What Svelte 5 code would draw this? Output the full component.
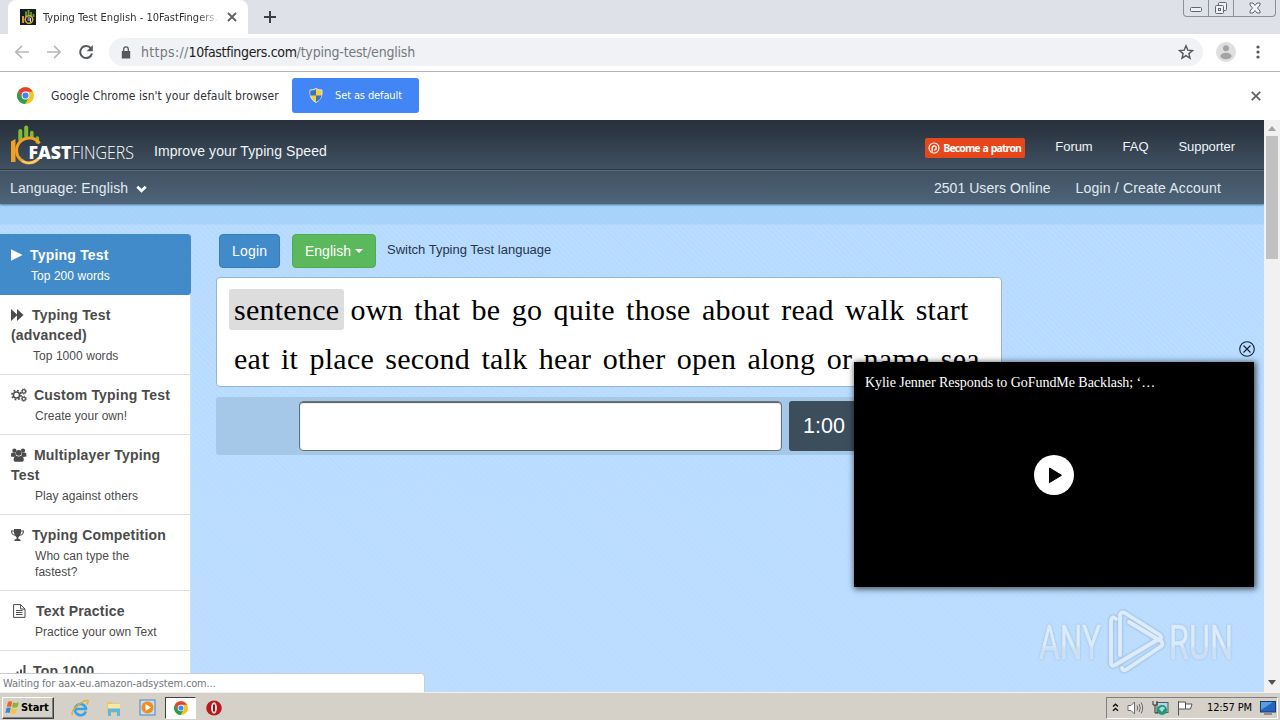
<script lang="ts">
	type Item = { icon: string; title: string; sub: string; indent: number; gap: number };

	// Sidebar entries, `indent` is where the sub line starts
	const items: Item[] = [
		{ icon: 'play', title: 'Typing Test', sub: 'Top 200 words', indent: 20, gap: 7 },
		{ icon: 'forward', title: 'Typing Test (advanced)', sub: 'Top 1000 words', indent: 22, gap: 8 },
		{ icon: 'cogs', title: 'Custom Typing Test', sub: 'Create your own!', indent: 24, gap: 7 },
		{ icon: 'users', title: 'Multiplayer Typing Test', sub: 'Play against others', indent: 24, gap: 7 },
		{ icon: 'trophy', title: 'Typing Competition', sub: 'Who can type the fastest?', indent: 24, gap: 8 },
		{ icon: 'file', title: 'Text Practice', sub: 'Practice your own Text', indent: 24, gap: 10 },
		{ icon: 'signal', title: 'Top 1000', sub: '', indent: 24, gap: 6 }
	];

	const rows = [
		['sentence', 'own', 'that', 'be', 'go', 'quite', 'those', 'about', 'read', 'walk', 'start'],
		['eat', 'it', 'place', 'second', 'talk', 'hear', 'other', 'open', 'along', 'or', 'name', 'sea']
	];

	let active = $state(0);
	let typed = $state('');
	let showVideo = $state(true);
</script>

{#snippet chrome(size: number)}
	<svg width={size} height={size} viewBox="0 0 16 16">
		<circle cx="8" cy="8" r="8" fill="#fbc116" />
		<path d="M1.1 4A8 8 0 0 0 7.6 16L11.2 9.8 8 8 4.8 9.9z" fill="#2a9d55" />
		<path d="M1.1 4 4.8 9.9 8 4.4h6.9A8 8 0 0 0 1.1 4z" fill="#dd4436" />
		<circle cx="8" cy="8" r="3.7" fill="#fff" />
		<circle cx="8" cy="8" r="2.9" fill="#4285f4" />
	</svg>
{/snippet}

{#snippet icon(name: string)}
	{#if name === 'play'}
		<svg width="12" height="14" viewBox="0 0 12 14"><path d="M0 1.2v11.6L11.6 7z" fill="currentColor" /></svg>
	{:else if name === 'forward'}
		<svg width="13" height="14" viewBox="0 0 13 14"><path d="M0 1v12l6-5.500V13l6.500-6L6 1v5.500z" fill="currentColor" /></svg>
	{:else if name === 'cogs'}
		<svg width="16" height="14" viewBox="0 0 16 14" fill="none" stroke="currentColor">
			<circle cx="5.500" cy="7" r="3.100" stroke-width="1.500" />
			<circle cx="5.500" cy="7" r="4.600" stroke-width="1.600" stroke-dasharray="1.800 1.810" />
			<circle cx="12.800" cy="3.400" r="1.700" stroke-width="1.200" />
			<circle cx="12.800" cy="3.400" r="2.600" stroke-dasharray="1 1.040" />
			<circle cx="12.800" cy="10.800" r="1.700" stroke-width="1.200" />
			<circle cx="12.800" cy="10.800" r="2.600" stroke-dasharray="1 1.040" />
		</svg>
	{:else if name === 'users'}
		<svg width="16" height="14" viewBox="0 0 16 14" fill="currentColor">
			<circle cx="3.400" cy="2.600" r="2.100" /><circle cx="12" cy="2.600" r="2.100" /><circle cx="7.700" cy="4.800" r="2.900" />
			<path d="M0 8.500V6.500q0-2 2-2h2.500l.5 3.500-2 1zM15.400 8.500V6.500q0-2-2-2h-2.500L10.400 8l2 1z" />
			<path d="M2.600 12q0-4 2.900-4.200 2.200 1.200 4.400 0 2.900.2 2.900 4.200 0 1.800-1.600 1.800H4.200q-1.600 0-1.600-1.800z" />
		</svg>
	{:else if name === 'trophy'}
		<svg width="13" height="14" viewBox="0 0 13 14" fill="currentColor">
			<path fill-rule="evenodd" d="M3 1h7v1.600h3q0 5-4.200 5.200-.8 1-1.400 1.400v1.600q2.400.2 2.400 2.200H3.200q0-2 2.400-2.200V9.200q-.8-.4-1.400-1.400Q0 7.600 0 2.600h3zM1 3.500q.2 2.800 2.600 3.300Q3 5.400 3 3.500zm11 0h-2q0 1.900-.6 3.300 2.400-.5 2.600-3.300z" />
		</svg>
	{:else if name === 'file'}
		<svg class="file" width="13" height="14" viewBox="0 0 13 14" fill="none" stroke="currentColor">
			<path d="M.6.6h7L12 5v8.400H.6zM7.600.6V5H12M3 6.500h6.500M3 8.500h6.500M3 10.500h6.500" />
		</svg>
	{:else}
		<svg class="signal" width="11" height="14" viewBox="0 0 11 14" fill="currentColor">
			<path d="M.500 7.500H2.500V13h-2zM4 5.500h2V13H4zM7.500 1h2v12h-2z" />
		</svg>
	{/if}
{/snippet}

<div class="screen">
	<div class="tabstrip">
		<div class="tab">
			<svg width="16" height="16" viewBox="0 0 16 16">
				<rect width="16" height="16" fill="#141d24" />
				<path d="M6 8V2.500M8.500 6V1M11 7V3M13.500 8V5" stroke="#6f9c2c" stroke-width="1.800" />
				<path d="M3 7v7" stroke="#d69a22" stroke-width="2" />
				<circle cx="9" cy="10.500" r="3.800" fill="none" stroke="#d8aa35" stroke-width="1.500" />
				<path d="M7.500 9h3v4M7.500 11h3" stroke="#ddd" fill="none" />
			</svg>
			<span class="tab-title">Typing Test English - 10FastFingers.</span>
			<svg width="10" height="10" viewBox="0 0 10 10"><path d="m1 1 8 8m0-8L1 9" stroke="#5f6368" stroke-width="1.800" /></svg>
		</div>
		<svg class="plus" width="12" height="12" viewBox="0 0 12 12"><path d="M6 0v12M0 6h12" stroke="#3c4043" stroke-width="2" /></svg>
		<div class="win-buttons">
			<span><svg width="13" height="6" viewBox="0 0 13 6"><rect x=".5" y=".5" width="11" height="4" rx="1" fill="#eef0f4" stroke="#606773" /></svg></span>
			<span><svg width="14" height="14" viewBox="0 0 14 14" fill="#eef0f4" stroke="#606773"><rect x="4.500" y="1.500" width="8" height="8" rx="1" /><rect x="1.500" y="4.500" width="8" height="8" rx="1" /><rect x="4.500" y="7.500" width="2" height="2" /></svg></span>
			<span class="wide"><svg width="12" height="12" viewBox="0 0 12 12"><path d="M1 1h3l2 2.500L8 1h3v2L8.500 6 11 9v2H8L6 8.500 4 11H1V9l2.500-3L1 3z" fill="#f2f4f7" stroke="#606773" /></svg></span>
		</div>
	</div>

	<div class="toolbar">
		<svg width="16" height="16" viewBox="0 0 16 16" fill="none" stroke="#b7b9bb" stroke-width="1.700"><path d="M15 8H2m6-6.200L1.800 8 8 14.200" /></svg>
		<svg width="16" height="16" viewBox="0 0 16 16" fill="none" stroke="#b7b9bb" stroke-width="1.700"><path d="M1 8h13M8 1.800 14.200 8 8 14.200" /></svg>
		<svg width="16" height="16" viewBox="0 0 16 16"><path d="M13 4.500A6 6 0 1 0 14 9.500" fill="none" stroke="#55585c" stroke-width="2" /><path d="M14.800 1v6.200H8.600z" fill="#55585c" /></svg>
		<div class="omnibox">
			<svg width="10" height="13" viewBox="0 0 10 13"><path d="M.8 5h8.400v7.500H.8z" fill="#55585c" /><path d="M2.700 5.500V3.200q0-2.300 2.300-2.300t2.300 2.300v2.300" fill="none" stroke="#55585c" stroke-width="1.300" /></svg>
			<span class="url"><i class="scheme">https://</i>10fastfingers.com<i>/typing-test/english</i></span>
			<svg width="16" height="16" viewBox="0 0 16 16"><path d="m8 1.800 1.800 4.300 4.700.4-3.600 3.100 1.100 4.600L8 11.700l-4 2.500 1.100-4.600L1.500 6.500l4.700-.4z" fill="none" stroke="#55585c" stroke-width="1.400" /></svg>
		</div>
		<svg class="avatar" width="20" height="20" viewBox="0 0 20 20"><circle cx="10" cy="10" r="10" fill="#dfdfdf" /><circle cx="10" cy="6.300" r="3" fill="#a3a3a3" /><ellipse cx="10" cy="14" rx="5.600" ry="3.200" fill="#a3a3a3" /></svg>
		<svg class="dots" width="4" height="14" viewBox="0 0 4 14" fill="#55585c"><circle cx="2" cy="2" r="1.600" /><circle cx="2" cy="7" r="1.600" /><circle cx="2" cy="12" r="1.600" /></svg>
	</div>

	<div class="infobar">
		{@render chrome(17)}
		<span class="info-text">Google Chrome isn't your default browser</span>
		<button class="default-btn">
			<svg width="14" height="15" viewBox="0 0 14 15"><path d="M7 .5q3 1.800 6 1.500 1 9-6 12.500Q0 11 1 2q3 .3 6-1.500z" fill="#f7cf3e" stroke="#dce4ef" /><path d="M7 1.200V7.500H1.300Q1 5 1.500 2.500 4.500 2.700 7 1.200zM7 7.500h5.600Q11.500 12 7 14z" fill="#3a72c4" /></svg>
			Set as default
		</button>
		<svg class="info-close" width="10" height="10" viewBox="0 0 10 10"><path d="m.8.8 8.400 8.400m0-8.400L.8 9.200" stroke="#5f6368" stroke-width="1.900" /></svg>
	</div>

	<div class="viewport">
		<div class="page">
			<header>
				<div class="top">
					<svg class="logo" width="128" height="44" viewBox="0 0 128 44">
						<g stroke-linecap="round" stroke="#80bb35" fill="none">
							<path d="M10.300 16V7" stroke-width="4" /><path d="M16.200 12V3.500" stroke-width="4" />
							<path d="M21.800 13V8.500" stroke-width="3.600" /><path d="M27.300 18v-4" stroke-width="3.600" />
						</g>
						<path d="M1 17.500 5.500 15v23H1z" fill="#f0a023" />
						<path d="M29.500 19.500A12.500 12.500 0 1 0 29 34" fill="none" stroke="#f0a023" stroke-width="3" />
						<path d="M12 37q9 5 17-3" fill="none" stroke="#f8cf78" stroke-width="2" />
						<text x="18.500" y="34.500" font-size="18" font-weight="800" textLength="43" lengthAdjust="spacingAndGlyphs">FAST</text>
						<text x="62" y="34.500" font-size="18" font-weight="300" textLength="62" lengthAdjust="spacingAndGlyphs">FINGERS</text>
					</svg>
					<span class="slogan">Improve your Typing Speed</span>
					<nav>
						<a class="patron" href="#patron">
							<svg width="12" height="12" viewBox="0 0 12 12" fill="none" stroke="#fff"><circle cx="6" cy="6" r="5" stroke-width="1.100" /><path d="M4.200 10.500V6a2 2 0 1 1 2 2" stroke-width="1.300" /></svg>
							<span>Become a patron</span>
						</a>
						<a href="#forum">Forum</a>
						<a href="#faq">FAQ</a>
						<a href="#supporter">Supporter</a>
					</nav>
				</div>
				<div class="sub">
					<span class="lang">Language: English</span>
					<svg width="11" height="8" viewBox="0 0 11 8"><path d="m1.300 1.800 4.200 4 4.200-4" fill="none" stroke="#fff" stroke-width="2.700" /></svg>
					<span class="online">2501 Users Online</span>
					<span class="account">Login / Create Account</span>
				</div>
			</header>

			<div class="content">
				<aside>
					{#each items as item, i}
						<button class="item" class:active={active === i} onclick={() => (active = i)}>
							<span class="title">{@render icon(item.icon)}<b style:margin-left="{item.gap}px">{item.title}</b></span>
							<span class="desc" style:padding-left="{item.indent}px">{item.sub}</span>
						</button>
					{/each}
				</aside>

				<main>
					<div class="actions">
						<button class="btn blue">Login</button>
						<button class="btn green">English<span class="caret"></span></button>
						<span class="switch">Switch Typing Test language</span>
					</div>
					<div class="words">
						{#each rows as row, r}
							<div class="row">
								{#each row as word, w}
									<span class:highlight={r === 0 && w === 0}>{word}</span>
								{/each}
							</div>
						{/each}
					</div>
					<div class="input-row">
						<input type="text" aria-label="Type here" bind:value={typed} />
						<div class="timer">1:00</div>
					</div>
				</main>
			</div>
		</div>

		<div class="scrollbar">
			<svg width="8" height="5" viewBox="0 0 8 5"><path d="M0 5h8L4 0z" fill="#a3a3a3" /></svg>
			<div class="thumb"></div>
			<svg width="8" height="5" viewBox="0 0 8 5"><path d="M0 0h8L4 5z" fill="#505050" /></svg>
		</div>

		{#if showVideo}
			<div class="video">
				<button class="video-close" aria-label="Close" onclick={() => (showVideo = false)}>
					<svg width="16" height="16" viewBox="0 0 16 16" fill="none" stroke="#122030" stroke-width="1.100"><circle cx="8" cy="8" r="7.300" /><path d="m4.500 4.500 7 7m0-7-7 7" /></svg>
				</button>
				<p>Kylie Jenner Responds to GoFundMe Backlash; ‘…</p>
				<svg class="play" width="40" height="40" viewBox="0 0 40 40"><circle cx="20" cy="20" r="20" fill="#fff" /><path d="M15.500 13v14.500l12-7.200z" fill="#000" stroke="#000" stroke-linejoin="round" /></svg>
			</div>
		{/if}

		<svg class="watermark" width="204" height="70" viewBox="0 0 204 70">
			<defs>
				<linearGradient id="fade" x1="0" y1="0" x2="0" y2="1">
					<stop offset=".55" stop-color="#dcecfd" />
					<stop offset=".6" stop-color="#ccdff2" />
				</linearGradient>
			</defs>
			<text x="3" y="52" font-size="49" textLength="62" lengthAdjust="spacingAndGlyphs">ANY</text>
			<text x="133" y="52" font-size="49" textLength="64" lengthAdjust="spacingAndGlyphs">RUN</text>
			<g fill="none" stroke-linejoin="round" stroke-linecap="round">
				<path class="edge" d="M80 12q-4-4-5 2v43q1 3 4 1l42-25M84 48V8q1-4 5-2l35 22q3 3-1 5l-30-18M86 61q1 4 5 1l33-22q5-3 0-7" />
				<path class="line" d="M80 12q-4-4-5 2v43q1 3 4 1l42-25M84 48V8q1-4 5-2l35 22q3 3-1 5l-30-18M86 61q1 4 5 1l33-22q5-3 0-7" />
			</g>
		</svg>

		<div class="status">Waiting for aax-eu.amazon-adsystem.com...</div>
	</div>

	<footer>
		<button class="start">
			<svg width="15" height="15" viewBox="0 0 15 15"><path d="M3 2q2-1.500 4.200-.2L6 7Q4 6 1.800 7z" fill="#e8622c" /><path d="M8 2.200q2.500 1.400 6 0L12.500 7q-3 1.400-5.500.3z" fill="#84b83a" /><path d="M1.500 8q2.300-1 4.300 0L4.600 13Q2.500 12 .3 13z" fill="#3c83d0" /><path d="M6.700 8.300q2.500 1.400 5.600.1L11 13q-2.500 1.400-5.500.3z" fill="#f8c62c" /></svg>
			<span>Start</span>
		</button>
		<div class="quick">
			<svg width="18" height="18" viewBox="0 0 18 18" fill="none"><path d="M14.800 12.500A5.600 5.600 0 1 1 14.700 8.500q.3.800.2 1.500H5" stroke="#3ba3e4" stroke-width="2.700" /><path d="M1.500 16Q-.5 13 6 7T16.800 1.500q1 1-1 4" stroke="#e2b02d" stroke-width="1.500" /></svg>
			<svg width="18" height="18" viewBox="0 0 18 18"><path d="M2 3h5l1 1.500h7V14H2z" fill="#e9c75c" /><path d="M3 5h12v5H3z" fill="#f8e9a2" /><path d="M3 17V9.500h12V17h-3v-4H6v4z" fill="#5fb7dc" /></svg>
			<svg width="18" height="18" viewBox="0 0 18 18"><rect x="1" y="1" width="15" height="15" fill="#c4dff4" stroke="#4a88bd" /><circle cx="8.500" cy="8.500" r="6" fill="#f18d1e" /><path d="M6.500 5v7l5.500-3.500z" fill="#fff" /></svg>
			<div class="task">{@render chrome(14)}</div>
			<svg width="16" height="16" viewBox="0 0 16 16"><ellipse cx="8" cy="8" rx="7.800" ry="7.500" fill="#b71b20" /><ellipse cx="8" cy="8" rx="2.900" ry="5.800" fill="#f6eaea" /><path d="M8 4.500v7" stroke="#8c1418" stroke-width="2" /></svg>
		</div>
		<div class="tray">
			<svg width="7" height="9" viewBox="0 0 7 9" fill="none" stroke="#111" stroke-width="1.400"><path d="m1 3.500 2.500-2.300L6 3.500M1 7.800l2.500-2.300L6 7.800" /></svg>
			<svg width="17" height="14" viewBox="0 0 17 14" fill="none" stroke="#6c6c6c"><path d="M1 4.500h3L7.500 1v12L4 9.500H1z" fill="#fff" /><path d="M10 4.500q1.500 2.500 0 5M12 3q2.700 4 0 8M14 1.500q3.500 5.500 0 11" /></svg>
			<svg width="17" height="16" viewBox="0 0 17 16"><rect x="5" y="2.500" width="11" height="10" fill="#bcd0e0" stroke="#4b5965" /><circle cx="10" cy="10" r="5" fill="#1f9679" /><path d="M7 9q3-4 6-1l-3 4z" fill="#9fe0c8" /><path d="M1 1v4h4V1M3 5v8h3" fill="none" stroke="#333" /></svg>
			<svg width="16" height="16" viewBox="0 0 16 16" fill="#fff" stroke="#555"><path d="M1.500 1v14.500M1.500 2h7v7h-7zM8.500 4H15l-1.500 5h-5" /></svg>
			<span class="clock">12:57 PM</span>
			<svg width="16" height="14" viewBox="0 0 16 14"><rect x=".5" y=".5" width="15" height="10.500" fill="#2464bd" stroke="#173c70" /><path d="M1 1h12L1 9z" fill="#5b9be2" /><path d="M4 13h8" stroke="#777" stroke-width="1.500" /></svg>
		</div>
	</footer>
</div>

<style>
	:global(body) {
		margin: 0;
		overflow: hidden;
	}

	.screen {
		width: 1280px;
		height: 720px;
		display: flex;
		flex-direction: column;
		overflow: hidden;
		background: #fff;
		font-family: 'DejaVu Sans Condensed', 'DejaVu Sans', sans-serif;
		font-size: 11px;
		color: #303236;
	}

	svg {
		display: block;
		flex-shrink: 0;
	}

	button {
		border: 0;
		margin: 0;
		padding: 0;
		font: inherit;
		text-align: left;
		cursor: pointer;
	}

	a {
		color: inherit;
		text-decoration: none;
	}

	.tabstrip {
		height: 34px;
		display: flex;
		align-items: center;
		background: #dee1e8;
		flex-shrink: 0;
	}

	.tab {
		box-sizing: border-box;
		width: 240px;
		height: 34px;
		margin-left: 8px;
		padding: 0 11px 0 12px;
		display: flex;
		align-items: center;
		background: #fff;
		border-radius: 8px 8px 0 0;
	}

	.tab-title {
		width: 176px;
		margin: 0 8px 0 7px;
		white-space: nowrap;
		letter-spacing: 0.02px;
		-webkit-mask-image: linear-gradient(90deg, #000 155px, transparent 178px);
		mask-image: linear-gradient(90deg, #000 155px, transparent 178px);
	}

	.plus {
		margin-left: 16px;
	}

	.win-buttons {
		display: flex;
		align-self: flex-start;
		margin: 0 4px 0 auto;
		box-sizing: border-box;
		height: 17px;
		border: 1px solid #8b909b;
		border-top: 0;
		border-radius: 0 0 4px 4px;
	}

	.win-buttons span {
		width: 24px;
		display: flex;
		align-items: center;
		justify-content: center;
		border-right: 1px solid #8b909b;
	}

	.win-buttons span:first-child {
		align-items: flex-end;
		padding-bottom: 3px;
		height: 13px;
	}

	.win-buttons .wide {
		width: 41px;
		border: 0;
	}

	.toolbar {
		box-sizing: border-box;
		height: 38px;
		padding: 0 19px 1px 14px;
		display: flex;
		align-items: center;
		gap: 16px;
		border-bottom: 1px solid #b3b5b6;
		flex-shrink: 0;
	}

	.omnibox {
		box-sizing: border-box;
		width: 1094px;
		height: 28px;
		margin-left: -1px;
		padding: 0 9px 0 12px;
		display: flex;
		align-items: center;
		border-radius: 14px;
		background: #f0f2f5;
	}

	.url {
		flex: 1;
		margin-left: 10px;
		font-size: 14px;
		letter-spacing: -0.35px;
		color: #202124;
	}

	.url i {
		font-style: normal;
		letter-spacing: -0.2px;
		color: #75797e;
	}

	.url .scheme {
		letter-spacing: 0.3px;
	}

	.avatar {
		margin-left: -3px;
	}

	.dots {
		margin-left: 4px;
	}

	.infobar {
		box-sizing: border-box;
		height: 48px;
		display: flex;
		align-items: center;
		padding: 0 19px 1px 17px;
		flex-shrink: 0;
	}

	.info-text {
		width: 229px;
		margin: 0 12px 0 17px;
		white-space: nowrap;
		font-size: 12px;
		letter-spacing: 0.05px;
	}

	.default-btn {
		width: 127px;
		height: 35px;
		display: flex;
		align-items: center;
		gap: 12px;
		padding-left: 17px;
		box-sizing: border-box;
		background: #4285f4;
		border-radius: 3px;
		color: #fff;
		letter-spacing: -0.12px;
		white-space: nowrap;
	}

	.info-close {
		margin-left: auto;
	}

	.viewport {
		position: relative;
		height: 572px;
		display: flex;
		overflow: hidden;
		flex-shrink: 0;
	}

	.page {
		width: 1264px;
		font-family: 'Liberation Sans', Arial, sans-serif;
		background:
			repeating-linear-gradient(45deg, rgba(255, 255, 255, 0.05) 0 2px, transparent 2px 4px),
			linear-gradient(#a4d2fa 104px, #b5daff 105px, #b9dcff 400px, #bbdcff 572px);
	}

	header {
		height: 84px;
		background: linear-gradient(#28303c, #2f3a47 20%, #415263 60%, #4e6478);
		box-shadow: 0 1px 2px #50789b;
		color: #eef4f8;
	}

	.top {
		box-sizing: border-box;
		height: 51px;
		display: flex;
		border-bottom: 1px solid #596c7d;
		box-shadow: inset 0 -1px #2b3948;
	}

	.logo {
		margin: 4px 0 0 10px;
		font-family: 'Open Sans', 'Noto Sans', sans-serif;
		fill: #fff;
	}

	.slogan {
		margin: 22px 0 0 16px;
		font-size: 14px;
		line-height: 18px;
		letter-spacing: 0.08px;
	}

	nav {
		margin: 18px 0 0 auto;
		padding-right: 29px;
		display: flex;
		align-items: flex-start;
		gap: 30px;
		font-size: 13px;
		line-height: 18px;
		letter-spacing: -0.06px;
	}

	.patron {
		box-sizing: border-box;
		width: 100px;
		height: 20px;
		padding-left: 3px;
		display: flex;
		align-items: center;
		gap: 3px;
		border-radius: 2px;
		background: #e6461a;
		color: #fff;
		font: 700 10.5px 'Open Sans', sans-serif;
		letter-spacing: -0.9px;
		word-spacing: 1px;
		white-space: nowrap;
	}

	.sub {
		box-sizing: border-box;
		height: 33px;
		display: flex;
		align-items: center;
		padding: 2px 43px 0 10px;
		font-size: 14px;
		line-height: 17px;
		letter-spacing: 0.13px;
		color: #e1eaf1;
	}

	.sub svg {
		margin-left: 8px;
	}

	.online {
		margin-left: auto;
		letter-spacing: 0.04px;
	}

	.account {
		margin-left: 25px;
		letter-spacing: 0.17px;
	}

	.content {
		display: flex;
		align-items: flex-start;
		padding-top: 30px;
	}

	aside {
		width: 191px;
		display: flex;
		flex-direction: column;
	}

	.item {
		box-sizing: border-box;
		padding: 10px 14px 9px 11px;
		background: #fff;
		border-bottom: 1px solid #ddd;
		border-right: 1px solid #d5e0ea;
		color: #4b4b4b;
	}

	.item.active {
		padding-top: 11px;
		background: #428bca;
		border-color: #428bca;
		border-radius: 0 4px 4px 0;
		color: #fff;
	}

	.title {
		display: block;
		font-size: 14px;
		line-height: 20px;
		letter-spacing: 0.2px;
	}

	.title svg {
		display: inline-block;
		vertical-align: -2px;
	}

	.title .file {
		margin-left: 2px;
	}

	.title .signal {
		margin-left: 5px;
	}

	.desc {
		display: block;
		padding: 3px 20px 1px 0;
		margin-right: -10px;
		font-size: 12px;
		line-height: 16px;
		letter-spacing: 0.05px;
	}

	main {
		width: 786px;
		margin-left: 25px;
	}

	.actions {
		display: flex;
		padding-left: 3px;
	}

	.btn {
		box-sizing: border-box;
		height: 34px;
		border-radius: 4px;
		color: #fff;
		font-size: 14px;
		display: flex;
		align-items: center;
		padding-left: 12px;
	}

	.blue {
		width: 61px;
		background: #428bca;
		border: 1px solid #357ebd;
		letter-spacing: 0.2px;
	}

	.green {
		width: 84px;
		margin-left: 12px;
		background: #5cb85c;
		border: 1px solid #4cae4c;
	}

	.caret {
		margin-left: 4px;
		border: 4px solid transparent;
		border-top-color: #fff;
		border-bottom: 0;
	}

	.switch {
		margin: 7px 0 0 11px;
		font-size: 13px;
		line-height: 18px;
		color: #26364a;
	}

	.words {
		box-sizing: border-box;
		height: 110px;
		margin-top: 9px;
		padding: 7px 17px;
		background: #fff;
		border: 1px solid #93b6d8;
		border-radius: 4px;
		font: 30px/41px 'Liberation Serif', 'Times New Roman', serif;
		letter-spacing: 0.25px;
		color: #000;
	}

	.row {
		display: flex;
		align-items: center;
		gap: 11.3px;
		height: 49px;
	}

	.highlight {
		margin: 0 -5px;
		padding: 0 5px;
		background: #ddd;
		border-radius: 3px;
	}

	.input-row {
		box-sizing: border-box;
		height: 58px;
		margin-top: 10px;
		padding: 4px 0 0 83px;
		display: flex;
		gap: 7px;
		background: #a6c8e8;
		border-radius: 3px;
	}

	input {
		box-sizing: border-box;
		width: 483px;
		height: 50px;
		padding: 0 12px;
		border: 1px solid #64727f;
		border-radius: 4px;
		background: #fff;
		box-shadow: inset 0 1px 1px #555;
		font-size: 24px;
		outline: 0;
	}

	.timer {
		box-sizing: border-box;
		width: 71px;
		height: 50px;
		padding-left: 14px;
		border-radius: 3px;
		background: #3c4d5c;
		color: #fff;
		font-size: 21.5px;
		line-height: 51px;
	}

	.scrollbar {
		box-sizing: border-box;
		width: 16px;
		padding: 6px 0 7px;
		display: flex;
		flex-direction: column;
		align-items: center;
		background: #f1f1f1;
	}

	.thumb {
		width: 12px;
		height: 123px;
		margin: 5px 0 auto;
		background: #c1c1c1;
	}

	/* Floating player over the page */
	.video {
		position: absolute;
		right: 26px;
		top: 242px;
		width: 400px;
		height: 225px;
		background: #000;
		box-shadow: 1px 1px 6px 1px rgba(0, 0, 0, 0.65);
		color: #fff;
	}

	.video p {
		margin: 12px 11px;
		font: 14px/17px 'Liberation Serif', serif;
		letter-spacing: -0.05px;
	}

	.video-close {
		position: absolute;
		top: -21px;
		right: -1px;
		background: none;
	}

	.play {
		position: absolute;
		left: 180px;
		top: 93px;
	}

	.watermark {
		position: absolute;
		left: 1036px;
		top: 487px;
		font-family: 'Roboto', sans-serif;
		filter: drop-shadow(0 0 1px rgba(110, 140, 175, 0.45));
	}

	.watermark text {
		fill: url(#fade);
		stroke: #d6e7f9;
		stroke-width: 0.6px;
	}

	.edge {
		stroke: #b0cbe5;
		stroke-width: 5px;
	}

	.line {
		stroke: #dcecfc;
		stroke-width: 3.8px;
	}

	.status {
		position: absolute;
		left: 0;
		bottom: 0;
		box-sizing: border-box;
		width: 425px;
		height: 19px;
		padding-left: 3px;
		background: #fff;
		border: 1px solid #c9cdd1;
		border-width: 1px 1px 0 0;
		border-radius: 0 4px 0 0;
		line-height: 19px;
		letter-spacing: -0.15px;
		color: #74787c;
	}

	footer {
		box-sizing: border-box;
		height: 28px;
		display: flex;
		align-items: center;
		padding: 2px 2px 0;
		background: #d5d0c8;
		border-top: 1px solid #f3f1ee;
	}

	.start {
		box-sizing: border-box;
		width: 52px;
		height: 22px;
		padding-left: 2px;
		display: flex;
		align-items: center;
		gap: 1px;
		background: #d5d0c8;
		border: 1px solid;
		border-color: #fff #404040 #404040 #fff;
		box-shadow: inset -1px -1px #808080;
		font-weight: 700;
		letter-spacing: -0.1px;
		color: #000;
	}

	.quick {
		display: flex;
		align-items: center;
		gap: 16px;
		margin-left: 17px;
	}

	.task {
		box-sizing: border-box;
		width: 31px;
		height: 22px;
		display: flex;
		align-items: center;
		justify-content: center;
		margin: 0 -6px 0 -8px;
		background: #fff;
		border: 1px solid;
		border-color: #404040 #fff #fff #404040;
	}

	.tray {
		box-sizing: border-box;
		width: 172px;
		height: 22px;
		margin-left: auto;
		padding: 0 0 0 5px;
		display: flex;
		align-items: center;
		gap: 8px;
		border: 1px solid;
		border-color: #808080 #fff #fff #808080;
		color: #000;
	}

	.clock {
		width: 45px;
		margin-left: 6px;
		white-space: nowrap;
		letter-spacing: -0.15px;
	}
</style>
